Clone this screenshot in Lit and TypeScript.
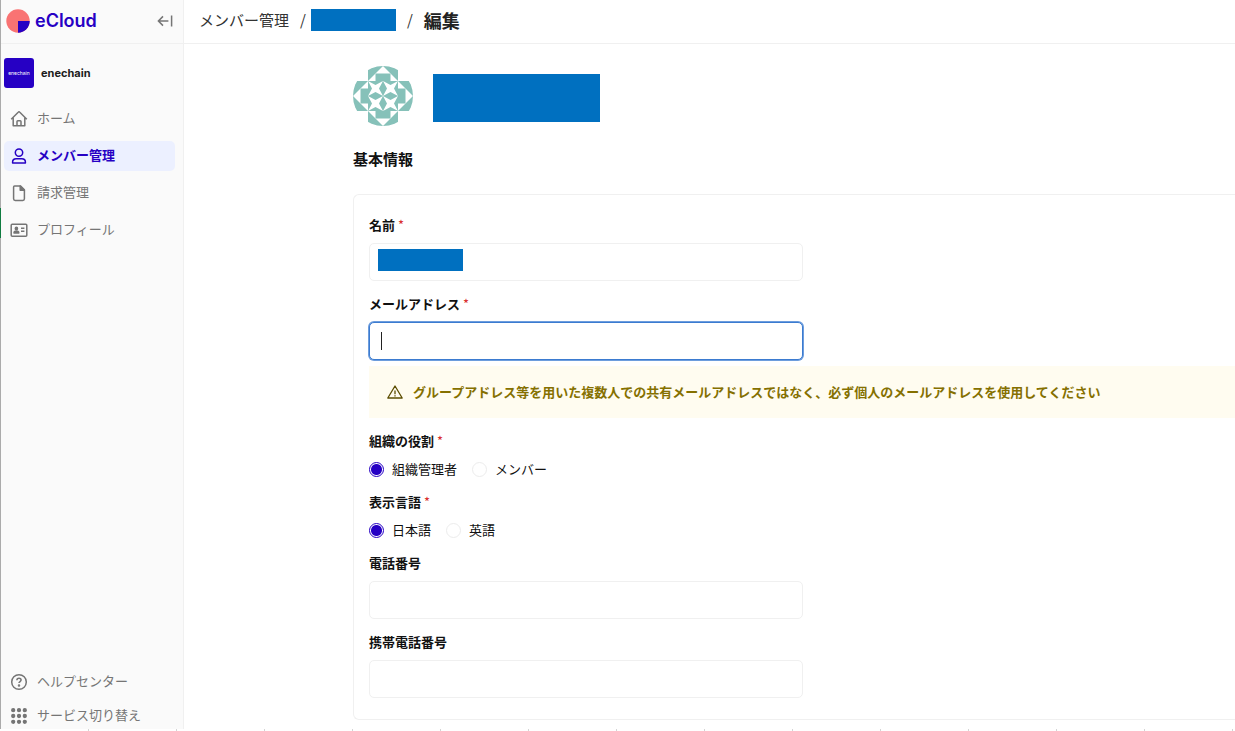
import { LitElement, html, css, svg, nothing } from "lit";
import { customElement, state } from "lit/decorators.js";
import { classMap } from "lit/directives/class-map.js";

const icons = {
  home: svg`<path d="M1.2 9.2 8.2 2.2a1.1 1.1 0 0 1 1.6 0l7 7M3.2 7.4v8.4h11.6V7.4M7 15.6v-4a.8.8 0 0 1 .8-.8h2.4a.8.8 0 0 1 .8.8v4"/>`,
  user: svg`<circle cx="9" cy="5.6" r="3.7"/><path d="M2.6 15.9v-.8c0-2 1.6-3.4 3.6-3.4h5.6c2 0 3.6 1.4 3.6 3.4v.8z"/>`,
  file: svg`<path d="M4.6 2h6l3.8 3.8v9a1.6 1.6 0 0 1-1.6 1.6H5.2a1.6 1.6 0 0 1-1.6-1.6V3a1 1 0 0 1 1-1z"/><path d="M10.2 2v4.2h4.2z" fill="currentColor"/>`,
  card: svg`<rect x="1.2" y="3.2" width="15.6" height="12" rx="1"/><circle cx="6.4" cy="7.4" r="1.1" fill="currentColor"/><path d="M4 11.9c0-1.5.9-2 2.4-2s2.4.5 2.4 2z" fill="currentColor"/><path d="M11 7.2h3.4M11 10.2h3.4"/>`,
  help: svg`<circle cx="9" cy="9" r="7.3"/><path d="M6.9 7.2c0-1.2 1-1.9 2.1-1.9s2.1.7 2.1 1.8c0 1.4-2.1 1.5-2.1 3"/><circle cx="9" cy="12.5" r=".5" fill="currentColor"/>`,
  grid: svg`${[3.2, 9, 14.8].map((y) =>
    [3.2, 9, 14.8].map((x) => svg`<circle cx=${x} cy=${y} r="1.4" fill="currentColor"/>`))}`,
};

type IconName = keyof typeof icons;
interface NavItem { icon: IconName; label: string; active?: boolean }

const mainNav: NavItem[] = [
  { icon: "home", label: "ホーム" },
  { icon: "user", label: "メンバー管理", active: true },
  { icon: "file", label: "請求管理" },
  { icon: "card", label: "プロフィール" },
];
const footNav: NavItem[] = [
  { icon: "help", label: "ヘルプセンター" },
  { icon: "grid", label: "サービス切り替え" },
];

@customElement("app-sidebar")
export class AppSidebar extends LitElement {
  static styles = css`
    :host { display: flex; flex-direction: column; box-sizing: border-box; background: #fafafa; border-right: 1px solid #f0f0f0; }
    .top { display: flex; align-items: center; height: 44px; box-sizing: border-box; padding: 0 9px 2px 5px; border-bottom: 1px solid #f0f0f0; }
    .logo { width: 24px; height: 24px; }
    .brand { flex: 1; margin-left: 5px; font: 600 18px/24px Inter, sans-serif; color: #2600c4; }
    .collapse { display: flex; padding: 0; border: 0; background: none; color: #757575; }
    .org { display: flex; align-items: center; gap: 7px; padding: 14px 3px 16px; font: 700 11px/16px Inter, sans-serif; color: #1c1c1c; }
    .badge { display: grid; place-items: center; width: 30px; height: 30px; border-radius: 3px; background: #2600c4; color: #fff; font: 400 5px/6px Inter, sans-serif; }
    nav { display: flex; flex-direction: column; gap: 7px; padding: 0 8px 0 3px; }
    .item { display: flex; align-items: center; gap: 9px; height: 30px; box-sizing: border-box; padding: 0 0 2px 6px; border-radius: 5px; font-size: 13px; line-height: 20px; color: #757575; text-decoration: none; }
    .active { background: #ecf0ff; color: #2600c4; font-weight: 700; }
    .glyph { width: 18px; height: 18px; padding-top: 2px; }
    .foot { margin-top: auto; gap: 8px; }
    .foot .item { height: 26px; }
  `;

  private link(item: NavItem) {
    return html`<a href="#" class=${classMap({ item: true, active: !!item.active })} aria-current=${item.active ? "page" : nothing}>
      <svg class="glyph" viewBox="0 0 18 18" fill="none" stroke="currentColor" stroke-width="1.5" stroke-linejoin="round" aria-hidden="true">${icons[item.icon]}</svg>
      <span>${item.label}</span>
    </a>`;
  }

  render() {
    return html`
      <div class="top">
        <svg class="logo" viewBox="0 0 24 24" aria-hidden="true">
          <circle cx="12" cy="12" r="11.7" fill="#f97373" />
          <path d="M12 12h11.7A11.7 11.7 0 0 1 12 23.7z" fill="#2600c4" />
        </svg>
        <span class="brand">eCloud</span>
        <button class="collapse" type="button" aria-label="メニューを閉じる">
          <svg width="18" height="18" viewBox="0 0 18 18" fill="none" stroke="currentColor" stroke-width="1.5"><path d="M12.4 9H2.6M7 4.4 2.4 9 7 13.6M15.6 3.4v11.2" /></svg>
        </button>
      </div>
      <div class="org"><span class="badge">enechain</span><span>enechain</span></div>
      <nav>${mainNav.map((i) => this.link(i))}</nav>
      <nav class="foot">${footNav.map((i) => this.link(i))}</nav>
    `;
  }
}

const starAt = (x: number, y: number) =>
  svg`<path transform="translate(${x} ${y})" d="M0 0 7.5 4 15 0 11 7.5 15 15 7.5 11 0 15 4 7.5z" fill="#fff"/>`;

const sideAt = (angle: number) =>
  svg`<g transform="rotate(${angle} 30 30)"><path d="M30 0 45 15H15z" fill="#fff"/><path d="M22.5 7.5h15V15h-15z"/></g>`;

@customElement("member-form")
export class MemberForm extends LitElement {
  @state() private role = "admin";
  @state() private lang = "ja";

  static styles = css`
    :host { display: block; padding: 21px 0 9px 169px; color: #111; }
    .profile { display: flex; align-items: center; gap: 20px; height: 62px; }
    .avatar { width: 60px; height: 60px; }
    .mask { display: block; background: #0070c0; }
    .mask-name { width: 167px; height: 48px; margin-top: 4px; }
    h2 { margin: 21px 0 24px; font-size: 15px; line-height: 22px; font-weight: 700; }
    form { display: flex; flex-direction: column; gap: 13px; padding: 20px 0 21px 15px; border: 1px solid #f0f0f0; border-right: 0; border-radius: 6px 0 0 6px; }
    .field, fieldset { display: flex; flex-direction: column; gap: 8px; margin: 0; padding: 0; border: 0; min-width: 0; }
    .label { padding: 0; font-size: 13px; line-height: 20px; font-weight: 700; }
    legend.label { margin-bottom: 8px; }
    .req { margin-left: 3px; color: #d92d2d; font-weight: 400; }
    .box { position: relative; width: calc(50% + 1px); min-width: 240px; }
    .text { display: block; width: 100%; height: 38px; box-sizing: border-box; padding: 0 12px; border: 1px solid #f0f0f0; border-radius: 5px; outline: 0; background: #fff; font: inherit; font-size: 13px; }
    .focused { border-color: #3b7bd0; box-shadow: 0 0 0 1px #6d9ddd; }
    .mask-value { position: absolute; left: 9px; top: 6px; width: 85px; height: 22px; }
    .caret { position: absolute; left: 12px; top: 10px; width: 1px; height: 18px; background: #222; }
    .notice { display: flex; align-items: center; gap: 10px; margin-top: -2px; padding: 16px 18px; background: #fffcf0; color: #857000; font-size: 13px; line-height: 20px; font-weight: 700; }
    .notice svg { flex: none; color: #5c4d00; }
    .options { display: flex; gap: 15px; }
    .option { display: flex; align-items: center; gap: 8px; font-size: 13px; line-height: 20px; }
    .radio { appearance: none; width: 15px; height: 15px; margin: 0; border: 1px solid #ececec; border-radius: 50%; background: #fff; }
    .radio:checked { border-color: #2600c4; background: radial-gradient(circle, #2600c4 5px, #fff 6px); }
  `;

  private req = html`<span class="req">*</span>`;

  private group(name: "role" | "lang", legend: string, options: [string, string][]) {
    return html`<fieldset>
      <legend class="label">${legend}${this.req}</legend>
      <div class="options">${options.map(([value, label]) => html`
        <label class="option"><input class="radio" type="radio" name=${name} value=${value} .checked=${this[name] === value} @change=${() => { (this as any)[name] = value; }} /><span>${label}</span></label>`)}
      </div>
    </fieldset>`;
  }

  render() {
    return html`
      <div class="profile">
        <svg class="avatar" viewBox="0 0 60 60" fill="#86c1b9" aria-hidden="true">
          <defs><clipPath id="round"><circle cx="30" cy="30" r="30" /></clipPath></defs>
          <g clip-path="url(#round)">
            <path d="M15 0h30v15h15v30H45v15H15V45H0V15h15z" />
            ${[0, 90, 180, 270].map(sideAt)}
            ${starAt(15, 15)}${starAt(30, 15)}${starAt(15, 30)}${starAt(30, 30)}
          </g>
        </svg>
        <span class="mask mask-name"></span>
      </div>
      <h2>基本情報</h2>
      <form>
        <div class="field">
          <label class="label" for="name">名前${this.req}</label>
          <div class="box"><input class="text" id="name" type="text" /><span class="mask mask-value"></span></div>
        </div>
        <div class="field">
          <label class="label" for="mail">メールアドレス${this.req}</label>
          <div class="box"><input class="text focused" id="mail" type="email" /><span class="caret"></span></div>
          <div class="notice">
            <svg width="16" height="16" viewBox="0 0 16 16" fill="none" stroke="currentColor" stroke-width="1.3" stroke-linejoin="round" aria-hidden="true"><path d="M8 2 15.2 14H.8zM8 6.4v3.8M8 11.2v1.4" /></svg>
            <span>グループアドレス等を用いた複数人での共有メールアドレスではなく、必ず個人のメールアドレスを使用してください</span>
          </div>
        </div>
        ${this.group("role", "組織の役割", [["admin", "組織管理者"], ["member", "メンバー"]])}
        ${this.group("lang", "表示言語", [["ja", "日本語"], ["en", "英語"]])}
        <div class="field">
          <label class="label" for="tel">電話番号</label>
          <div class="box"><input class="text" id="tel" type="tel" /></div>
        </div>
        <div class="field">
          <label class="label" for="mobile">携帯電話番号</label>
          <div class="box"><input class="text" id="mobile" type="tel" /></div>
        </div>
      </form>
    `;
  }
}

@customElement("app-root")
export class AppRoot extends LitElement {
  static styles = css`
    :host { display: flex; flex-direction: column; min-height: 100vh; background: #fff; font-family: "Noto Sans CJK JP", sans-serif; font-size: 13px; }
    .shell { flex: 1; display: grid; grid-template-columns: 1px 183px minmax(0, 1fr); }
    .edge { background: linear-gradient(#ababab 208px, #107c41 208px 238px, #ababab 238px); }
    header { display: flex; align-items: center; height: 44px; box-sizing: border-box; padding: 0 15px 3px; border-bottom: 1px solid #f0f0f0; font-size: 15px; line-height: 24px; color: #333; }
    .crumb { color: inherit; text-decoration: none; }
    .slash { padding: 0 5px 0 11px; }
    .mask { width: 85px; height: 22px; background: #0070c0; }
    h1 { margin: 0 0 0 6px; font-size: 18px; line-height: 26px; font-weight: 700; color: #222; }
    .ruler { height: 2px; background: repeating-linear-gradient(90deg, #fff 0 87px, #d4d4d4 87px 88px) 1px 0; }
  `;

  render() {
    return html`
      <div class="shell">
        <div class="edge"></div>
        <app-sidebar></app-sidebar>
        <main>
          <header>
            <a class="crumb" href="#">メンバー管理</a><span class="slash">/</span><span class="mask"></span><span class="slash">/</span>
            <h1>編集</h1>
          </header>
          <member-form></member-form>
        </main>
      </div>
      <div class="ruler"></div>
    `;
  }
}
